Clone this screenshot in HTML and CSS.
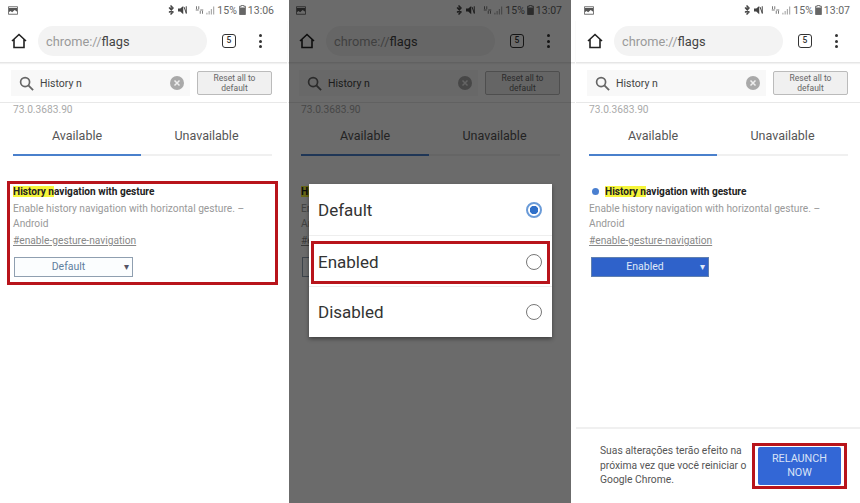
FILE: index.html
```html
<!DOCTYPE html>
<html lang="en">
<head>
	<meta charset="UTF-8">
	<title>chrome://flags</title>
	<link rel="stylesheet" href="styles.css">
</head>
<body>

<svg class="defs" width="0" height="0">
	<symbol id="icoPicture" viewBox="0 0 12 10">
		<path d="M0.500 0.500h11v9h-11z" fill="#fff" stroke="#555"/>
		<path d="M1 2h10v4.500l-3-2-3 2.500-2-1.500-2 1.500z" fill="#555"/>
	</symbol>
	<symbol id="icoBluetooth" viewBox="0 0 8 12">
		<path d="M1 3l5 5.500-2.500 2.500v-10l2.500 2.500-5 5.500" fill="none" stroke="#444" stroke-width="1.400"/>
	</symbol>
	<symbol id="icoMute" viewBox="0 0 12 12">
		<path d="M0 4h3l4-3.500v11l-4-3.500h-3z" fill="#444"/>
		<path d="M8 2l3 8M11 1v10" stroke="#444" stroke-width="1.300"/>
	</symbol>
	<symbol id="icoData" viewBox="0 0 12 12">
		<path d="M2 1v4M5 1v4M7 7v4M10 7v4M1 6h4M7 6h4" stroke="#777" stroke-width="1.300"/>
	</symbol>
	<symbol id="icoSignal" viewBox="0 0 10 10">
		<path d="M1 10v-2M3.500 10v-4M6 10v-6M8.500 10v-9" stroke="#aaa" stroke-width="1.300"/>
	</symbol>
	<symbol id="icoBattery" viewBox="0 0 8 12">
		<path d="M2.500 0.500h3v1h2v10h-7v-10h2z" fill="#fff" stroke="#555"/>
		<path d="M1 3h6v8.500h-6z" fill="#666"/>
	</symbol>
	<symbol id="icoHome" viewBox="0 0 16 16">
		<path d="M1 8l7-6.500 7 6.500M3 6.500v8h10v-8" fill="none" stroke="#222" stroke-width="1.600"/>
	</symbol>
	<symbol id="icoSearch" viewBox="0 0 16 16">
		<circle cx="6.500" cy="6.500" r="4.800" fill="none" stroke="#666" stroke-width="1.800"/>
		<path d="M10 10l5 5" stroke="#666" stroke-width="2"/>
	</symbol>
	<symbol id="icoClear" viewBox="0 0 14 14">
		<circle cx="7" cy="7" r="7" fill="#a9a9a9"/>
		<path d="M4.500 4.500l5 5M9.500 4.500l-5 5" stroke="#eee" stroke-width="1.500"/>
	</symbol>
</svg>

<div class="shots">

	<section class="phone">
		<div class="status">
			<svg class="ico-pic"><use href="#icoPicture"/></svg>
			<span class="status-right">
				<svg class="ico-s"><use href="#icoBluetooth"/></svg>
				<svg class="ico-s"><use href="#icoMute"/></svg>
				<svg class="ico-s gap"><use href="#icoData"/></svg>
				<svg class="ico-s"><use href="#icoSignal"/></svg>
				<span class="pct">15%</span>
				<svg class="ico-b"><use href="#icoBattery"/></svg>
				<span class="clock">13:06</span>
			</span>
		</div>
		<div class="toolbar">
			<svg class="ico-home"><use href="#icoHome"/></svg>
			<div class="omni"><span class="scheme">chrome://</span>flags</div>
			<span class="tabs-count">5</span>
			<span class="dots"><i></i><i></i><i></i></span>
		</div>
		<div class="searchbar">
			<div class="search">
				<svg class="ico-search"><use href="#icoSearch"/></svg>
				<span class="query">History n</span>
				<svg class="ico-clear"><use href="#icoClear"/></svg>
			</div>
			<div class="reset">Reset all to default</div>
		</div>
		<div class="version">73.0.3683.90</div>
		<div class="tabs">
			<div class="tab tab-on">Available</div>
			<div class="tab">Unavailable</div>
		</div>
		<div class="flag flag-marked">
			<div class="flag-title"><mark>History n</mark>avigation with gesture</div>
			<div class="flag-desc">Enable history navigation with horizontal gesture. – Android</div>
			<div class="flag-link">#enable-gesture-navigation</div>
			<div class="select">Default<span class="caret">▾</span></div>
		</div>
	</section>

	<section class="phone">
		<div class="status">
			<svg class="ico-pic"><use href="#icoPicture"/></svg>
			<span class="status-right">
				<svg class="ico-s"><use href="#icoBluetooth"/></svg>
				<svg class="ico-s"><use href="#icoMute"/></svg>
				<svg class="ico-s gap"><use href="#icoData"/></svg>
				<svg class="ico-s"><use href="#icoSignal"/></svg>
				<span class="pct">15%</span>
				<svg class="ico-b"><use href="#icoBattery"/></svg>
				<span class="clock">13:07</span>
			</span>
		</div>
		<div class="toolbar">
			<svg class="ico-home"><use href="#icoHome"/></svg>
			<div class="omni"><span class="scheme">chrome://</span>flags</div>
			<span class="tabs-count">5</span>
			<span class="dots"><i></i><i></i><i></i></span>
		</div>
		<div class="searchbar">
			<div class="search">
				<svg class="ico-search"><use href="#icoSearch"/></svg>
				<span class="query">History n</span>
				<svg class="ico-clear"><use href="#icoClear"/></svg>
			</div>
			<div class="reset">Reset all to default</div>
		</div>
		<div class="version">73.0.3683.90</div>
		<div class="tabs">
			<div class="tab tab-on">Available</div>
			<div class="tab">Unavailable</div>
		</div>
		<div class="flag">
			<div class="flag-title"><mark>History n</mark>avigation with gesture</div>
			<div class="flag-desc">Enable history navigation with horizontal gesture. – Android</div>
			<div class="flag-link">#enable-gesture-navigation</div>
			<div class="select">Default<span class="caret">▾</span></div>
		</div>

		<div class="scrim"></div>
		<div class="dialog">
			<div class="option">Default<span class="radio radio-on"></span></div>
			<div class="option option-marked">Enabled<span class="radio"></span></div>
			<div class="option">Disabled<span class="radio"></span></div>
		</div>
	</section>

	<section class="phone">
		<div class="status">
			<svg class="ico-pic"><use href="#icoPicture"/></svg>
			<span class="status-right">
				<svg class="ico-s"><use href="#icoBluetooth"/></svg>
				<svg class="ico-s"><use href="#icoMute"/></svg>
				<svg class="ico-s gap"><use href="#icoData"/></svg>
				<svg class="ico-s"><use href="#icoSignal"/></svg>
				<span class="pct">15%</span>
				<svg class="ico-b"><use href="#icoBattery"/></svg>
				<span class="clock">13:07</span>
			</span>
		</div>
		<div class="toolbar">
			<svg class="ico-home"><use href="#icoHome"/></svg>
			<div class="omni"><span class="scheme">chrome://</span>flags</div>
			<span class="tabs-count">5</span>
			<span class="dots"><i></i><i></i><i></i></span>
		</div>
		<div class="searchbar">
			<div class="search">
				<svg class="ico-search"><use href="#icoSearch"/></svg>
				<span class="query">History n</span>
				<svg class="ico-clear"><use href="#icoClear"/></svg>
			</div>
			<div class="reset">Reset all to default</div>
		</div>
		<div class="version">73.0.3683.90</div>
		<div class="tabs">
			<div class="tab tab-on">Available</div>
			<div class="tab">Unavailable</div>
		</div>
		<div class="flag">
			<div class="flag-title"><span class="dot"></span><mark>History n</mark>avigation with gesture</div>
			<div class="flag-desc">Enable history navigation with horizontal gesture. – Android</div>
			<div class="flag-link">#enable-gesture-navigation</div>
			<div class="select select-on">Enabled<span class="caret">▾</span></div>
		</div>

		<div class="relaunch">
			<p>Suas alterações terão efeito na próxima vez que você reiniciar o Google Chrome.</p>
			<div class="relaunch-mark"><div class="relaunch-btn">RELAUNCH NOW</div></div>
		</div>
	</section>

</div>

</body>
</html>
```

FILE: styles.css
```css
* {
	box-sizing: border-box;
}

body {
	margin: 0;
	background: #fff;
	font-family: Roboto, "Liberation Sans", sans-serif;
	overflow: hidden;
}

.defs {
	display: block;
}

.shots {
	display: flex;
	gap: 1px;
	width: 860px;
	height: 503px;
	overflow: hidden;
}

.phone {
	position: relative;
	flex: none;
	display: flex;
	flex-direction: column;
	width: 287px;
	height: 503px;
	background: #fff;
}

/* status bar */
.status {
	display: flex;
	align-items: center;
	justify-content: space-between;
	height: 20px;
	padding: 0 13px 0 8px;
}
.status-right {
	display: flex;
	align-items: center;
	gap: 2px;
	color: #666;
	font-size: 10.500px;
}
.ico-pic {
	width: 10px;
	height: 9px;
}
.ico-s {
	width: 9px;
	height: 10px;
}
.ico-s.gap {
	margin-left: 6px;
}
.ico-b {
	width: 7px;
	height: 10px;
}

/* toolbar */
.toolbar {
	display: flex;
	align-items: center;
	height: 43px;
	padding: 0 22px 0 11px;
	border-bottom: 1px solid #e6e6e6;
	box-shadow: 0 1px 1px #f2f2f2;
}
.ico-home {
	flex: none;
	width: 16px;
	height: 16px;
}
.omni {
	flex: none;
	width: 169px;
	height: 30px;
	margin-left: 11px;
	padding-left: 8px;
	border-radius: 15px;
	background: #f3f3f3;
	color: #444;
	font-size: 12.800px;
	line-height: 31px;
}
.scheme {
	color: #9a9a9a;
}
.tabs-count {
	flex: none;
	width: 14px;
	height: 14px;
	margin-left: 15px;
	border: 1.500px solid #333;
	border-radius: 3px;
	color: #333;
	font-size: 8.500px;
	font-weight: 500;
	line-height: 11px;
	text-align: center;
}
.dots {
	display: flex;
	flex-direction: column;
	gap: 2.500px;
	margin-left: 23px;
}
.dots i {
	width: 3px;
	height: 3px;
	border-radius: 50%;
	background: #333;
}

/* search row */
.searchbar {
	display: flex;
	align-items: center;
	height: 40px;
	padding: 1px 14px 0 11px;
	border-bottom: 1px solid #e8e8e8;
}
.search {
	display: flex;
	align-items: center;
	width: 179px;
	height: 26px;
	padding: 0 6px 0 8px;
	background: #f8f8f8;
}
.ico-search {
	flex: none;
	width: 15px;
	height: 15px;
}
.query {
	flex: 1;
	margin-left: 6px;
	color: #444;
	font-size: 10.500px;
}
.ico-clear {
	flex: none;
	width: 14px;
	height: 14px;
}
.reset {
	flex: none;
	width: 75px;
	height: 24px;
	margin-left: 7px;
	padding: 1px 6px;
	border: 1px solid #bbb;
	border-radius: 2px;
	background: #f0f0f0;
	color: #666;
	font-size: 8.500px;
	line-height: 10px;
	text-align: center;
}

.version {
	height: 14px;
	padding: 1px 0 0 13px;
	color: #aaa;
	font-size: 10.200px;
	line-height: 12px;
}

/* tabs */
.tabs {
	display: flex;
	width: 259px;
	height: 39px;
	margin-left: 13px;
	border-bottom: 2px solid #f0f0f0;
}
.tab {
	flex: 1;
	color: #555;
	font-size: 12.500px;
	line-height: 38px;
	text-align: center;
}
.tab-on {
	flex: none;
	width: 128px;
	height: 39px;
	border-bottom: 2px solid #4a80cc;
}

/* flag card */
.flag {
	margin: 25px 0 0 7px;
	width: 271px;
	height: 104px;
	padding: 0 3px;
	border: 3px solid transparent;
}
.flag-marked {
	border-color: #b8141b;
}
.flag-title {
	display: flex;
	align-items: center;
	height: 14px;
	color: #222;
	font-size: 10.100px;
	font-weight: 700;
	white-space: pre;
}
.flag-title mark {
	background: #f6f53a;
	color: #222;
}
.flag-desc {
	margin-top: 3px;
	color: #999;
	font-size: 10.200px;
	line-height: 15px;
}
.flag-link {
	margin-top: 2px;
	color: #888;
	font-size: 10.200px;
	line-height: 15px;
	text-decoration: underline;
}
.select {
	position: relative;
	width: 119px;
	height: 20px;
	margin: 9px 0 0 1px;
	padding-right: 10px;
	border: 1px solid #8f9fb0;
	background: #fbfdfe;
	color: #5f7f9f;
	font-size: 10.500px;
	line-height: 18px;
	text-align: center;
}
.caret {
	position: absolute;
	top: 0;
	right: 3px;
	color: #556;
	font-size: 10px;
}
.dot {
	width: 7px;
	height: 7px;
	margin: 0 6px 0 3px;
	border-radius: 50%;
	background: #4a7fd0;
}
.select-on {
	margin-left: 2px;
	width: 118px;
	border-color: #6080b0;
	background: #2f62ca;
	color: #dfe8f8;
}
.select-on .caret {
	color: #dfe8f8;
}

/* dialog */
.scrim {
	position: absolute;
	top: 0;
	right: 4px;
	bottom: 0;
	left: 1px;
	background: rgba(0, 0, 0, 0.58);
}
.dialog {
	position: absolute;
	top: 184px;
	left: 21px;
	width: 243px;
	height: 153px;
	background: #fff;
	box-shadow: 0 2px 4px rgba(0, 0, 0, 0.4);
}
.option {
	display: flex;
	align-items: center;
	justify-content: space-between;
	height: 52px;
	padding: 0 10px 0 9px;
	border-bottom: 1px solid #eee;
	color: #333;
	font-size: 17px;
}
.option:last-child {
	height: 51px;
	border-top: 1px solid #eee;
	border-bottom: 0;
}
.option-marked {
	height: 43px;
	margin: 5px 2px 2px;
	padding: 0 5px 2px 4px;
	border: 3px solid #b8141b;
}
.radio {
	width: 16px;
	height: 16px;
	border: 1.500px solid #777;
	border-radius: 50%;
}
.radio-on {
	border: 2px solid #6a9bd8;
	background: radial-gradient(circle, #2f6fc8 0 4px, #fff 4.500px);
}

/* relaunch bar */
.relaunch {
	display: flex;
	align-items: center;
	margin-top: auto;
	height: 76px;
	padding: 0 16px 0 24px;
	border-top: 2px solid #f0f0f0;
}
.relaunch p {
	flex: none;
	width: 150px;
	margin: 0;
	color: #555;
	font-size: 10.300px;
	line-height: 14.500px;
}
.relaunch-mark {
	flex: none;
	margin-left: auto;
	padding: 1px 3px;
	border: 3px solid #b8141b;
}
.relaunch-btn {
	width: 83px;
	height: 38px;
	padding: 5px 8px;
	border-radius: 2px;
	background: #3367d6;
	color: #d8e2f6;
	font-size: 10.800px;
	line-height: 13.500px;
	text-align: center;
}
```
